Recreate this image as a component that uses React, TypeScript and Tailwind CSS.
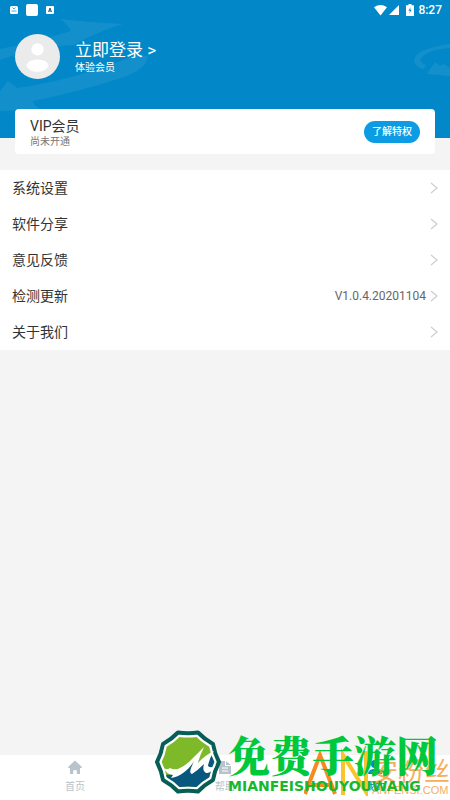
import React from 'react';

interface MenuItem {
  label: string;
  value?: string;
}

const menuItems: MenuItem[] = [
  { label: '系统设置' },
  { label: '软件分享' },
  { label: '意见反馈' },
  { label: '检测更新', value: 'V1.0.4.20201104' },
  { label: '关于我们' },
];

const StatusBar: React.FC = () => (
  <div className="relative flex h-5 items-center justify-between px-2 text-white">
    <div className="flex items-center gap-2">
      <svg className="ml-0.5 size-2" viewBox="0 0 8 8">
        <rect width="8" height="8" rx="1.500" fill="#fff" />
        <path d="M2.500 1.500l1.500 1.500 1.500-1.500M1.500 5h5" fill="none" stroke="#0288c8" strokeWidth=".7" />
      </svg>
      <svg className="size-3" viewBox="0 0 12 12">
        <rect width="12" height="12" rx="2" fill="#fff" />
      </svg>
      <svg className="size-2" viewBox="0 0 8 8">
        <rect width="8" height="8" rx="1" fill="#fff" />
        <path d="M2.500 6L4 2l1.500 4M3 5h2" fill="none" stroke="#1b5c80" strokeWidth="1" />
      </svg>
    </div>
    <div className="flex items-center">
      <svg className="h-3 w-7" viewBox="0 0 28 12" fill="#fff">
        <path d="M0 3.200Q6.500-1 13 3.200L6.500 11.500z" />
        <path d="M25 1v10H15z" />
      </svg>
      <svg className="ml-1 h-3 w-2" viewBox="0 0 8 12">
        <path d="M2.500 1.200V0h3v1.200H8V12H0V1.200z" fill="#fff" />
        <path d="M4.600 3L2.500 6.800h1.400L3.400 9.500 5.600 5.800H4.200z" fill="#0288c8" />
      </svg>
      <span className="ml-1 font-['Roboto','Liberation_Sans',sans-serif] text-xs font-medium">8:27</span>
    </div>
  </div>
);

// faint arrows behind the profile
const HeaderArt: React.FC = () => (
  <svg className="absolute inset-0 h-full w-full" viewBox="0 0 450 138" preserveAspectRatio="none" fill="#fff" fillOpacity=".07">
    <path d="M0 49Q35 42 71 31Q67 24 60 19Q91 23 123 24Q96 32 74 45Q36 46 0 60z" />
    <path d="M0 91L8 81L17 88Q75 80 136 55L148 56Q147 69 121 78Q74 93 33 101Q33 105 40 109L0 111z" />
    <path d="M450 44Q414 49 414 61Q416 68 424 69L426 65Q415 61 426 54Q434 49 450 48z" />
    <path d="M427 74L435 62L440 66L444 64L450 68V76z" />
  </svg>
);

const Chevron: React.FC = () => (
  <svg className="h-3 w-2" viewBox="0 0 8 12" fill="none" stroke="#cfcfcf" strokeWidth="1.300">
    <path d="M1 1l6 5-6 5" />
  </svg>
);

const badgePath =
  'M65 34Q60.600 42.600 59 52Q50.500 56.700 44 63.500Q34 62 24 63.500Q17.500 56.700 9 52Q7.400 42.600 3 34Q7.400 25.400 9 16Q17.500 11.300 24 4.500Q34 6 44 4.500Q50.500 11.300 59 16Q60.600 25.400 65 34z';

const Emblem: React.FC = () => (
  <svg className="size-17 shrink-0" viewBox="0 0 68 68">
    <defs>
      <clipPath id="badge">
        <path d={badgePath} transform="translate(5.100 5.100) scale(.85)" />
      </clipPath>
    </defs>
    <path d={badgePath} fill="#fff" stroke="#075e57" strokeWidth="4" strokeLinejoin="round" />
    <g clipPath="url(#badge)">
      <path d="M0 0h68v68H0z" fill="#7db928" />
      <path d="M8 47Q24 47 34 41L46 27L43 40L56 27L68 20V68H8z" fill="#07577f" />
    </g>
    <path
      d="M9 39Q12 43 16 40Q19 42 24 41Q31 38 36 33Q43 26 50 19Q46 27 44 35Q51 27 60 23Q55 31 54 38Q57 41 62 37Q57 46 52 45Q48 43 50 36Q44 42 38 46Q35 46 37 40L40 33Q35 41 29 45Q24 49 17 50L19 47Q12 46 9 39z"
      fill="#fff"
    />
  </svg>
);

const GreenMark: React.FC = () => (
  <div className="pointer-events-none absolute right-3 bottom-1 flex items-center gap-1.5 whitespace-nowrap">
    <Emblem />
    <div className="flex flex-col">
      <div className="font-['Noto_Serif_CJK_SC','Noto_Sans_CJK_SC',serif] text-[42px] leading-12 font-black text-[#00c83c]">免费手游网</div>
      <div className="font-['DejaVu_Sans','Liberation_Sans',sans-serif] text-sm leading-4 font-bold text-[#16b82c]">MIANFEISHOUYOUWANG</div>
    </div>
  </div>
);

const OrangeMark: React.FC = () => (
  <div className="pointer-events-none absolute right-0 bottom-1 flex items-end whitespace-nowrap text-[#f39a38]">
    <svg className="h-12 w-17 shrink-0" viewBox="0 0 68 48" fill="none" strokeWidth="4">
      <path d="M39 47V7L62 44V3" stroke="#f7c52b" />
      <path d="M1 46L16 7L31 46M7 37H26" stroke="#f58a1f" />
    </svg>
    <div className="flex flex-col opacity-80">
      <div className="font-['Noto_Sans_CJK_SC',sans-serif] text-[26px] leading-7">安粉丝</div>
      <div className="font-['Liberation_Sans',sans-serif] text-[11px] leading-3">ANFENSI.COM</div>
    </div>
  </div>
);

const TabBar: React.FC = () => (
  <nav className="relative flex h-[45px] bg-white">
    <button className="flex flex-1 flex-col items-center gap-1 pt-1 text-[10px] leading-4 text-[#b8c4cc]">
      <svg className="size-4" viewBox="0 0 16 16" fill="currentColor">
        <path d="M8 1.500l7 6.500-.6.900H13V15H9.800v-3.800H6.200V15H3V8.900H1.600L1 8z" />
      </svg>
      首页
    </button>
    <button className="flex flex-1 flex-col items-center gap-1 pt-1 text-[10px] leading-4 text-[#b8c4cc]">
      <svg className="size-4" viewBox="0 0 16 16" fill="currentColor">
        <path d="M2 2h6v5h6v8H2zM9 2l5 4H9z" />
        <path d="M5 9h6M5 12h6" stroke="#fff" />
      </svg>
      帮助
    </button>
    <button className="flex flex-1 flex-col items-center gap-1 pt-1 text-[10px] leading-4 text-[#0288c8]">
      <svg className="size-4" viewBox="0 0 16 16" fill="currentColor">
        <circle cx="8" cy="5" r="4" />
        <path d="M1 15q0-5 7-5t7 5z" />
      </svg>
      我的
    </button>
  </nav>
);

const App: React.FC = () => {
  return (
    <div className="flex min-h-screen flex-col bg-[#f4f4f4] font-['Roboto','Noto_Sans_CJK_SC',sans-serif]">
      <header className="relative h-[138px] bg-[#0288c8]">
        <HeaderArt />
        <StatusBar />
        <a href="#login" className="relative mt-3.5 flex items-center gap-[15px] px-[15px] text-white">
          <svg className="size-[45px] shrink-0" viewBox="0 0 44 44">
            <circle cx="22" cy="22" r="22" fill="#ebebeb" />
            <circle cx="22" cy="15" r="6" fill="#fff" />
            <path d="M11 31Q13 25 22 25T33 31Q30 37 22 37T11 31z" fill="#fff" />
          </svg>
          <div className="pt-0.5">
            <div className="text-[17px] leading-5">立即登录 &gt;</div>
            <div className="text-[10px] leading-4">体验会员</div>
          </div>
        </a>
      </header>

      <section className="relative mx-[15px] -mt-[29px] flex h-[45px] items-center justify-between rounded-sm bg-white px-[15px]">
        <div className="pt-1">
          <h2 className="text-sm leading-4 text-[#333]">VIP会员</h2>
          <p className="text-[10px] leading-4 text-[#777]">尚未开通</p>
        </div>
        <button className="rounded-full bg-[#0c9ce4] px-2 text-[10px] leading-[22px] font-medium text-white">了解特权</button>
      </section>

      <ul className="mt-4 bg-white">
        {menuItems.map((item) => (
          <li key={item.label}>
            <button className="flex h-9 w-full items-center gap-1 px-3 text-left">
              <span className="flex-1 text-sm text-[#333]">{item.label}</span>
              {item.value && <span className="text-xs text-[#666]">{item.value}</span>}
              <Chevron />
            </button>
          </li>
        ))}
      </ul>

      <div className="relative mt-auto">
        <TabBar />
        <OrangeMark />
        <GreenMark />
      </div>
    </div>
  );
};

export default App;
